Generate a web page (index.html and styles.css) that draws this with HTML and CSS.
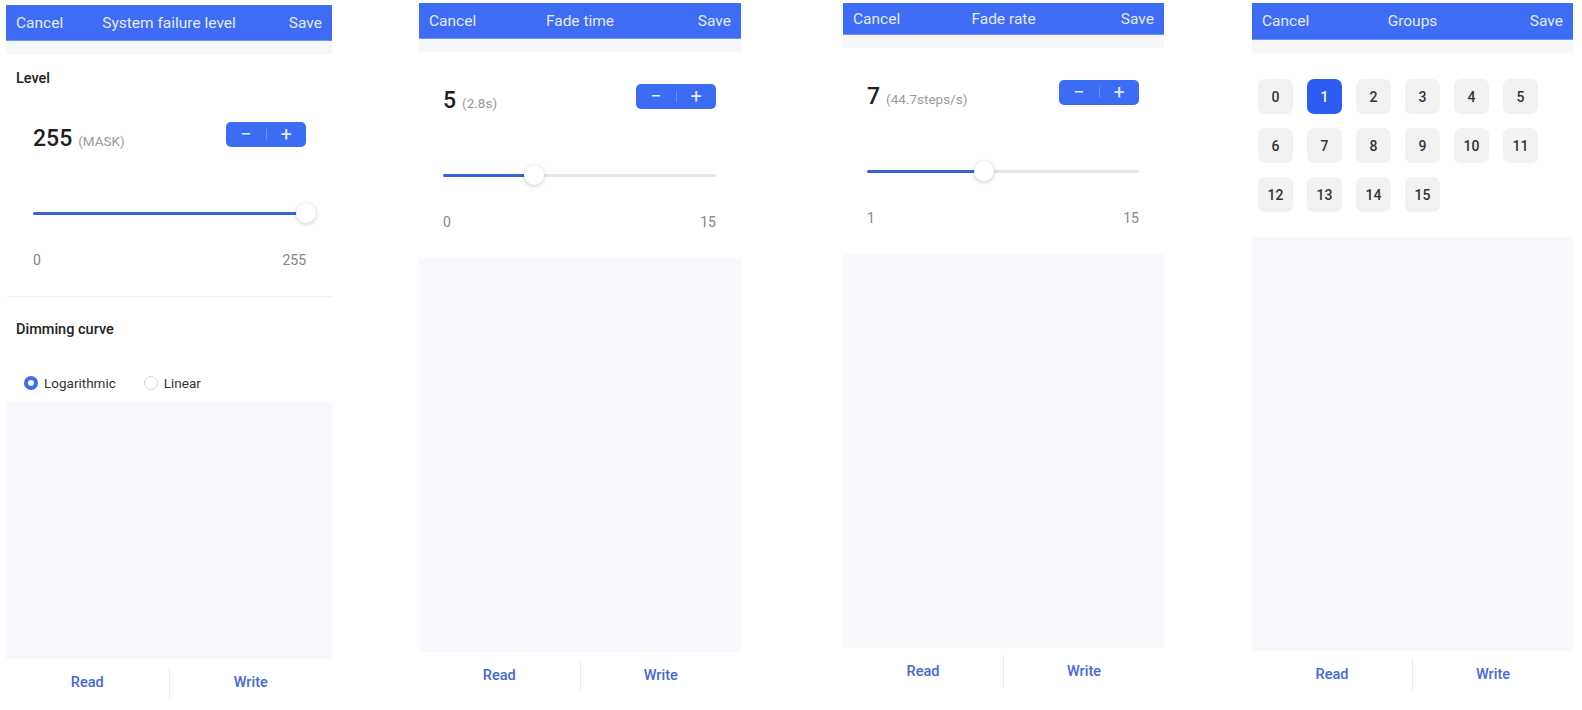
FILE: index.html
```html
<!DOCTYPE html>
<html lang="en">
<head>
<meta charset="utf-8">
<title>Settings screens</title>
<link rel="stylesheet" href="styles.css">
</head>
<body>
<div class="page">

  <section class="phone phone--1">
    <header class="bar bar--36">
      <span class="bar__btn">Cancel</span>
      <span class="bar__title">System failure level</span>
      <span class="bar__btn bar__btn--right">Save</span>
    </header>
    <div class="strip"></div>
    <div class="card card--titled">
      <div class="card__title">Level</div>
      <div class="value-row">
        <div class="value"><span class="value__num">255</span><span class="value__unit">(MASK)</span></div>
        <div class="stepper"><span class="stepper__btn">−</span><i class="stepper__sep"></i><span class="stepper__btn">+</span></div>
      </div>
      <div class="slider">
        <div class="slider__track"></div>
        <div class="slider__fill" style="width:100%"></div>
        <div class="slider__thumb" style="left:100%"></div>
      </div>
      <div class="range"><span>0</span><span>255</span></div>
    </div>
    <div class="rule"></div>
    <div class="curve">
      <div class="card__title">Dimming curve</div>
      <div class="radios">
        <label class="radio"><i class="radio__dot radio__dot--on"></i><span>Logarithmic</span></label>
        <label class="radio"><i class="radio__dot"></i><span>Linear</span></label>
      </div>
    </div>
    <div class="fill"></div>
    <footer class="actions"><span class="actions__btn">Read</span><i class="actions__sep"></i><span class="actions__btn">Write</span></footer>
  </section>

  <section class="phone phone--2">
    <header class="bar bar--36">
      <span class="bar__btn">Cancel</span>
      <span class="bar__title">Fade time</span>
      <span class="bar__btn bar__btn--right">Save</span>
    </header>
    <div class="strip"></div>
    <div class="card">
      <div class="value-row">
        <div class="value"><span class="value__num">5</span><span class="value__unit">(2.8s)</span></div>
        <div class="stepper"><span class="stepper__btn">−</span><i class="stepper__sep"></i><span class="stepper__btn">+</span></div>
      </div>
      <div class="slider">
        <div class="slider__track"></div>
        <div class="slider__fill" style="width:33.3%"></div>
        <div class="slider__thumb" style="left:33.3%"></div>
      </div>
      <div class="range"><span>0</span><span>15</span></div>
    </div>
    <div class="fill"></div>
    <footer class="actions"><span class="actions__btn">Read</span><i class="actions__sep"></i><span class="actions__btn">Write</span></footer>
  </section>

  <section class="phone phone--3">
    <header class="bar bar--32">
      <span class="bar__btn">Cancel</span>
      <span class="bar__title">Fade rate</span>
      <span class="bar__btn bar__btn--right">Save</span>
    </header>
    <div class="strip"></div>
    <div class="card">
      <div class="value-row">
        <div class="value"><span class="value__num">7</span><span class="value__unit">(44.7steps/s)</span></div>
        <div class="stepper"><span class="stepper__btn">−</span><i class="stepper__sep"></i><span class="stepper__btn">+</span></div>
      </div>
      <div class="slider">
        <div class="slider__track"></div>
        <div class="slider__fill" style="width:42.9%"></div>
        <div class="slider__thumb" style="left:42.9%"></div>
      </div>
      <div class="range"><span>1</span><span>15</span></div>
    </div>
    <div class="fill"></div>
    <footer class="actions"><span class="actions__btn">Read</span><i class="actions__sep"></i><span class="actions__btn">Write</span></footer>
  </section>

  <section class="phone phone--4">
    <header class="bar bar--37">
      <span class="bar__btn">Cancel</span>
      <span class="bar__title">Groups</span>
      <span class="bar__btn bar__btn--right">Save</span>
    </header>
    <div class="strip"></div>
    <div class="groups">
      <span class="group">0</span>
      <span class="group group--on">1</span>
      <span class="group">2</span>
      <span class="group">3</span>
      <span class="group">4</span>
      <span class="group">5</span>
      <span class="group">6</span>
      <span class="group">7</span>
      <span class="group">8</span>
      <span class="group">9</span>
      <span class="group">10</span>
      <span class="group">11</span>
      <span class="group">12</span>
      <span class="group">13</span>
      <span class="group">14</span>
      <span class="group">15</span>
    </div>
    <div class="fill"></div>
    <footer class="actions"><span class="actions__btn">Read</span><i class="actions__sep"></i><span class="actions__btn">Write</span></footer>
  </section>

</div>
</body>
</html>
```

FILE: styles.css
```css
* { box-sizing: border-box; }

html, body {
  margin: 0;
  padding: 0;
  background: #ffffff;
}

body {
  font-family: Roboto, "Noto Sans", "Liberation Sans", sans-serif;
  color: #222;
  width: 1582px;
  height: 710px;
  overflow: hidden;
}

.page {
  display: flex;
  align-items: flex-start;
  padding-left: 6px;
}

.phone {
  display: flex;
  flex-direction: column;
  background: #fff;
}

.phone--1 { width: 326px; height: 701px; margin-top: 5px; }
.phone--2 { width: 322px; height: 696px; margin-top: 3px; margin-left: 87px; }
.phone--3 { width: 321px; height: 692px; margin-top: 3px; margin-left: 102px; }
.phone--4 { width: 321px; height: 695px; margin-top: 3px; margin-left: 88px; }

/* top bar */
.bar {
  display: grid;
  grid-template-columns: 1fr auto 1fr;
  align-items: center;
  padding: 0 10px 0 10px;
  background: #3e6cf5;
  color: #e4ebff;
  font-size: 15.5px;
  border-bottom: 1px solid #6f93f8;
}
.bar--36 { height: 36px; }
.bar--32 { height: 32px; }
.bar--37 { height: 37px; }

.bar__btn { justify-self: start; }
.bar__btn--right { justify-self: end; }
.bar__title { justify-self: center; }

.strip {
  height: 13px;
  background: #f5f7fb;
}

/* slider card */
.card {
  padding: 32px 25px 28px 24px;
}
.card--titled {
  padding: 15px 26px 28px 27px;
}
.card--titled .card__title {
  margin-left: -17px;
  margin-bottom: 33px;
}

.card__title {
  font-size: 14.5px;
  font-weight: 500;
  line-height: 20px;
  color: #222;
}

.value-row {
  display: flex;
  align-items: center;
  justify-content: space-between;
  height: 25px;
}

.value {
  display: flex;
  align-items: baseline;
  gap: 6px;
  padding-top: 8px;
}
.value__num {
  font-size: 23px;
  font-weight: 500;
  line-height: 23px;
  color: #1f1f1f;
}
.value__unit {
  font-size: 13.5px;
  color: #9a9a9a;
}

.stepper {
  display: flex;
  align-items: center;
  width: 80px;
  height: 25px;
  border-radius: 5px;
  background: #3d6cf4;
  color: rgba(255, 255, 255, 0.9);
}
.stepper__btn {
  flex: 1;
  text-align: center;
  font-size: 20px;
  font-weight: 400;
  line-height: 25px;
}
.stepper__sep {
  width: 1px;
  height: 11px;
  background: rgba(255, 255, 255, 0.25);
}

.slider {
  position: relative;
  height: 20px;
  margin-top: 56px;
}
.slider__track {
  position: absolute;
  left: 0;
  right: 0;
  top: 9px;
  height: 3px;
  border-radius: 2px;
  background: #e6e6e6;
}
.slider__fill {
  position: absolute;
  left: 0;
  top: 9px;
  height: 3px;
  border-radius: 2px;
  background: #3a62d9;
}
.slider__thumb {
  position: absolute;
  top: 0;
  width: 20px;
  height: 20px;
  margin-left: -10px;
  border-radius: 50%;
  background: #fff;
  box-shadow: 0 1px 4px rgba(0, 0, 0, 0.22);
}

.range {
  display: flex;
  justify-content: space-between;
  margin-top: 29px;
  font-size: 14px;
  line-height: 16px;
  color: #858585;
}

.rule {
  height: 1px;
  background: #f1f2f5;
}

/* dimming curve */
.curve {
  padding: 23px 10px 9px 10px;
}
.radios {
  display: flex;
  align-items: center;
  gap: 28px;
  height: 20px;
  margin-top: 33px;
  padding-left: 8px;
}
.radio {
  display: flex;
  align-items: center;
  gap: 6px;
  font-size: 13.5px;
  color: #333;
}
.radio__dot {
  width: 14px;
  height: 14px;
  border-radius: 50%;
  border: 1px solid #d6d6d6;
  background: #fff;
}
.radio__dot--on {
  border: 4px solid #3d6cf4;
}

/* groups */
.groups {
  display: grid;
  grid-template-columns: repeat(6, 35px);
  grid-auto-rows: 35px;
  gap: 14px;
  padding: 26px 6px 25px 6px;
}
.group {
  display: flex;
  align-items: center;
  justify-content: center;
  border-radius: 7px;
  background: #f2f2f3;
  font-size: 14px;
  font-weight: 500;
  color: #333;
}
.group--on {
  background: #2e5cf3;
  color: #fff;
}

.fill {
  flex: 1;
  background: #f7f9fd;
}

.actions {
  display: flex;
  align-items: center;
  height: 47px;
  background: #fff;
}
.actions__btn {
  flex: 1;
  text-align: center;
  font-size: 14.5px;
  font-weight: 500;
  color: #4468d6;
}
.actions__sep {
  width: 1px;
  height: 33px;
  background: #ececec;
}
```
